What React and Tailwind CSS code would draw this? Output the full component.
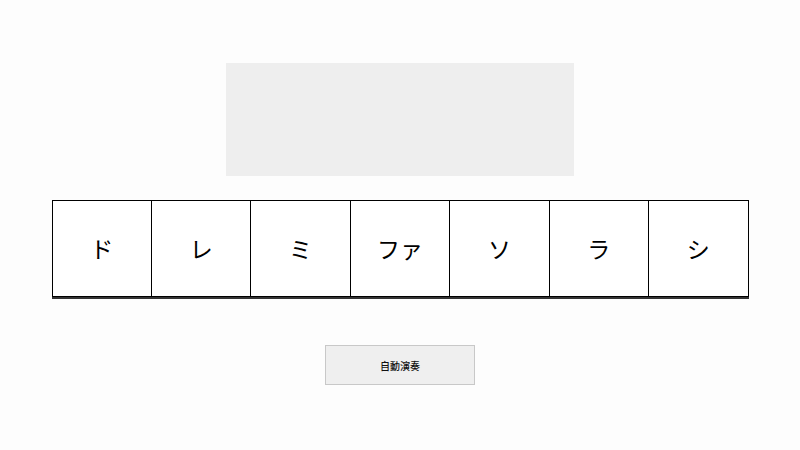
export default function App() {
  const notes = ["ド", "レ", "ミ", "ファ", "ソ", "ラ", "シ"];
  return (
    <div className="w-[800px] h-[450px] bg-[#fdfdfd] flex flex-col items-center pt-[63px]" style={{ fontFamily: '"Noto Sans CJK JP", "Noto Sans", sans-serif' }}>
      <div className="w-[348px] h-[113px] bg-[#eeeeee]"></div>
      <div className="mt-[24px] w-[697px] grid grid-cols-7 border-l border-black shadow-[0_2px_0_#333]">
        {notes.map((n) => (
          <div key={n} className="h-[97px] border-t border-r border-b border-black bg-white flex items-center justify-center text-[23px] text-black">
            {n}
          </div>
        ))}
      </div>
      <button className="mt-[48px] w-[150px] h-[40px] bg-[#efefef] border border-[#c8c8c8] text-[10px] font-medium text-[#111] flex items-center justify-center">
        自動演奏
      </button>
    </div>
  );
}
